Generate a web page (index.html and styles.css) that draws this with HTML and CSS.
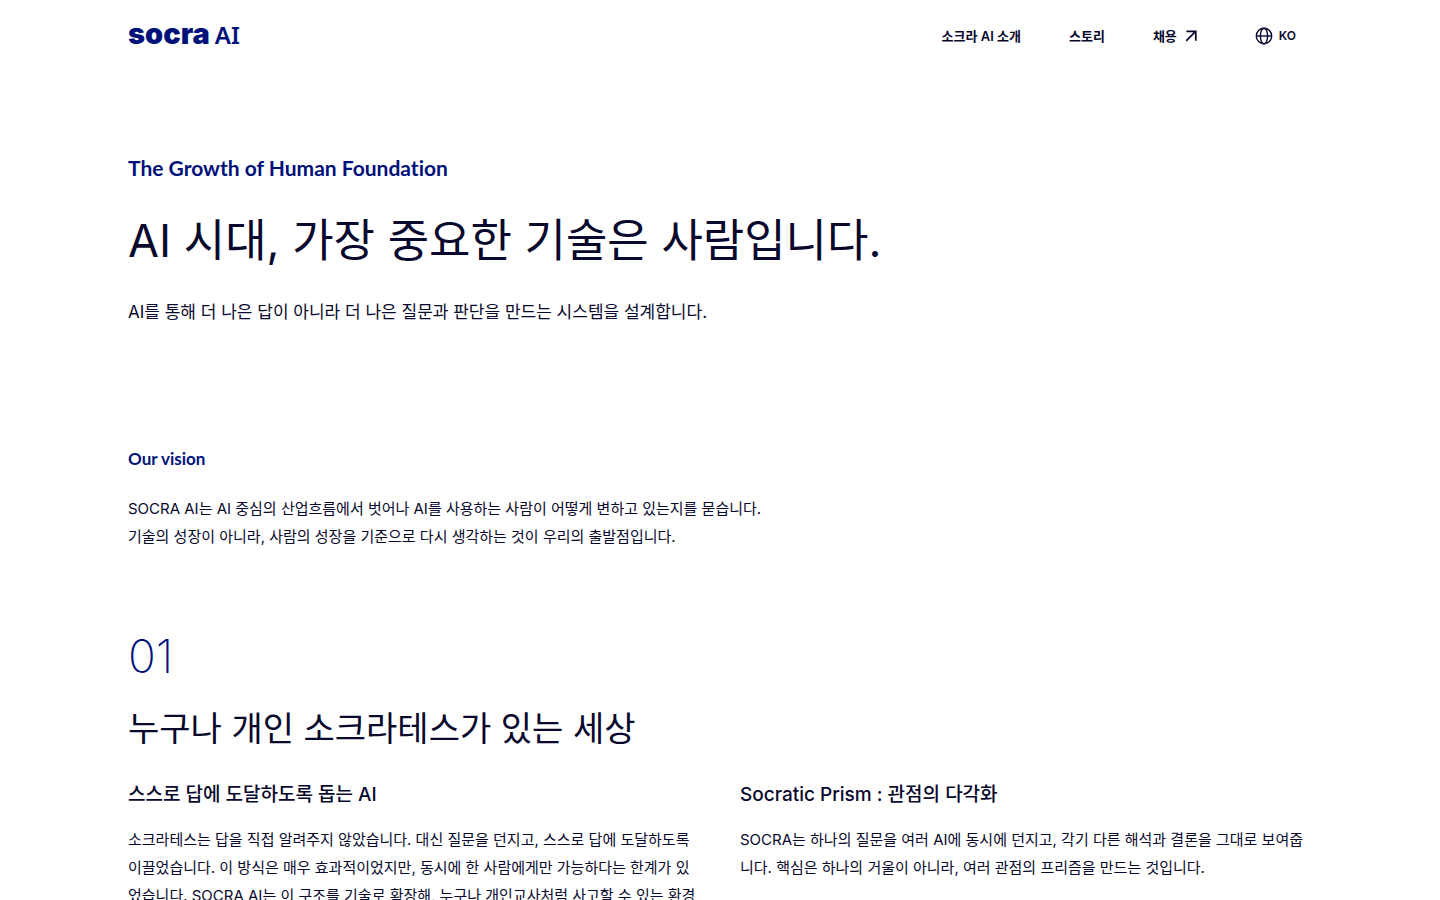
FILE: index.html
```html
<!DOCTYPE html>
<html lang="ko">
<head>
    <meta charset="UTF-8">
    <meta name="viewport" content="width=device-width, initial-scale=1.0">
    <title>SOCRA AI</title>
    <link rel="stylesheet" href="styles.css">
</head>
<body>
    <header class="header">
        <a class="logo" href="#"><span class="logo-name">socra</span><span class="logo-ai">AI</span></a>
        <nav class="nav">
            <a href="#">소크라 AI 소개</a>
            <a href="#">스토리</a>
            <a href="#">채용
                <svg width="12" height="12" viewBox="0 0 12 12" fill="none" stroke="currentColor" stroke-width="1.7"><path d="M1.2 10.8 10.6 1.4M1.4 1.3h9.4v9.4"/></svg>
            </a>
            <button class="lang" type="button">
                <svg width="18" height="18" viewBox="0 0 18 18" fill="none" stroke="currentColor" stroke-width="1.4"><circle cx="9" cy="9" r="7.7"/><ellipse cx="9" cy="9" rx="3.6" ry="7.7"/><path d="M1.3 9h15.4"/></svg>
                KO
            </button>
        </nav>
    </header>

    <main>
        <section class="hero">
            <p class="hero-label">The Growth of Human Foundation</p>
            <h1>AI 시대, 가장 중요한 기술은 사람입니다.</h1>
            <p class="hero-text">AI를 통해 더 나은 답이 아니라 더 나은 질문과 판단을 만드는 시스템을 설계합니다.</p>
        </section>

        <section class="vision">
            <h2 class="vision-label">Our vision</h2>
            <p>SOCRA AI는 AI 중심의 산업흐름에서 벗어나 AI를 사용하는 사람이 어떻게 변하고 있는지를 묻습니다.<br>기술의 성장이 아니라, 사람의 성장을 기준으로 다시 생각하는 것이 우리의 출발점입니다.</p>
        </section>

        <section class="story">
            <div class="number">01</div>
            <h2>누구나 개인 소크라테스가 있는 세상</h2>
            <div class="columns">
                <article>
                    <h3>스스로 답에 도달하도록 돕는 AI</h3>
                    <p>소크라테스는 답을 직접 알려주지 않았습니다. 대신 질문을 던지고, 스스로 답에 도달하도록 이끌었습니다. 이 방식은 매우 효과적이었지만, 동시에 한 사람에게만 가능하다는 한계가 있었습니다. SOCRA AI는 이 구조를 기술로 확장해, 누구나 개인교사처럼 사고할 수 있는 환경</p>
                </article>
                <article>
                    <h3>Socratic Prism : 관점의 다각화</h3>
                    <p>SOCRA는 하나의 질문을 여러 AI에 동시에 던지고, 각기 다른 해석과 결론을 그대로 보여줍니다. 핵심은 하나의 거울이 아니라, 여러 관점의 프리즘을 만드는 것입니다.</p>
                </article>
            </div>
        </section>
    </main>
</body>
</html>
```
FILE: styles.css
```css
* {
    box-sizing: border-box;
    margin: 0;
    padding: 0;
}
body {
    font-family: Inter, "Noto Sans CJK KR", sans-serif;
    font-size: 15px;
    line-height: 28px;
    color: #09092d;
    background-color: #fff;
}
a {
    color: inherit;
    text-decoration: none;
}
.header {
    display: flex;
    justify-content: space-between;
    align-items: center;
    height: 72px;
    padding: 0 128px;
}
.logo {
    display: flex;
    align-items: baseline;
    gap: 5px;
    padding-bottom: 4px;
    color: #00127a;
    line-height: 40px;
}
.logo-name {
    font-size: 29px;
    font-weight: 900;
}
.logo-ai {
    font-family: "Noto Sans", sans-serif;
    font-size: 24px;
    font-weight: 600;
}
.nav {
    display: flex;
    align-items: center;
    gap: 48px;
    font-size: 13px;
    font-weight: 600;
}
.nav a {
    display: flex;
    align-items: center;
    gap: 8px;
}
.lang {
    display: flex;
    align-items: center;
    gap: 6px;
    padding: 8px 16px 8px 10px;
    border: none;
    background: none;
    color: inherit;
    font: inherit;
    font-size: 12px;
    cursor: pointer;
}
main {
    padding: 80px 128px 0;
}
.hero-label {
    font-family: Lato, sans-serif;
    font-size: 21px;
    font-weight: 700;
    font-variant-ligatures: none;
    line-height: 32px;
    color: #00127a;
}
h1 {
    margin-top: 24px;
    font-size: 45px;
    font-weight: 400;
    line-height: 66px;
}
.hero-text {
    margin-top: 22px;
    font-size: 17px;
    line-height: 32px;
}
.vision {
    margin-top: 117px;
}
.vision-label {
    font-family: Lato, sans-serif;
    font-size: 17px;
    font-weight: 700;
    line-height: 28px;
    color: #00127a;
}
.vision p {
    margin-top: 22px;
}
.story {
    margin-top: 73px;
}
.number {
    font-size: 46px;
    font-weight: 200;
    line-height: 64px;
    color: #00127a;
}
.story h2 {
    margin-top: 16px;
    font-size: 34px;
    font-weight: 400;
    line-height: 50px;
}
.columns {
    display: grid;
    grid-template-columns: 1fr 1fr;
    gap: 40px;
    margin-top: 27px;
}
h3 {
    font-size: 19px;
    font-weight: 500;
    line-height: 28px;
}
article p {
    margin-top: 17px;
}
```
